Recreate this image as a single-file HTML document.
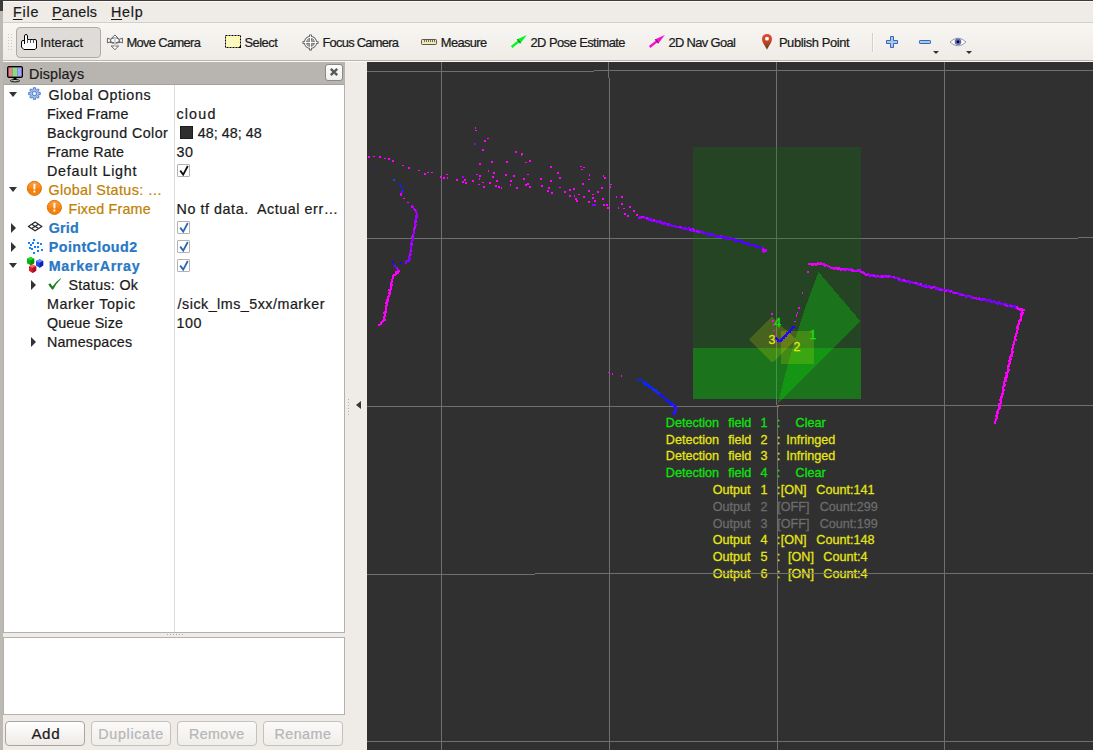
<!DOCTYPE html>
<html lang="en">
<head>
<meta charset="utf-8">
<title>RViz</title>
<style>
html,body{margin:0;padding:0;}
body{width:1093px;height:750px;overflow:hidden;position:relative;background:#efebe7;
  font-family:"Liberation Sans",sans-serif;color:#1a1a1a;}
.abs{position:absolute;}
.t{position:absolute;white-space:pre;line-height:1;-webkit-text-stroke:0.22px currentColor;}
.t u{text-decoration:underline;text-decoration-thickness:1px;text-underline-offset:2px;text-decoration-skip-ink:none;}
svg{position:absolute;overflow:visible;}
/* window edges */
#edgeTop{left:0;top:0;width:1093px;height:1px;background:#3c3b37;}
#edgeLeftDark{left:0;top:0;width:3px;height:11px;background:#3c3b37;}
#edgeLeft{left:0;top:11px;width:3px;height:739px;background:#bcb9b5;}
/* menubar */
#menubar{left:3px;top:1px;width:1090px;height:21px;background:#efece8;border-top:1px solid #fbfaf9;box-sizing:border-box;}
#menuline{left:3px;top:22px;width:1090px;height:1px;background:#d3cfca;}
/* toolbar */
#toolbar{left:3px;top:23px;width:1090px;height:37px;background:linear-gradient(#f8f6f2,#efece8);}
#tbline{left:3px;top:60px;width:1090px;height:1px;background:#b9b5b0;}
#tbline2{left:3px;top:61px;width:1090px;height:1px;background:#fbfaf8;}
#grip{left:7px;top:33px;width:5px;height:19px;background-image:radial-gradient(circle,#c9c5c0 0.7px,transparent 0.9px);background-size:3px 3px;}
#interactBtn{left:16px;top:27px;width:83px;height:29px;border:1px solid #aeaaa5;border-radius:4px;background:#dedbd8;}
#tbsep{left:872px;top:33px;width:1px;height:19px;background:#d3cfca;box-shadow:1px 0 0 #fbfaf8;}
.dd{width:0;height:0;border-left:3px solid transparent;border-right:3px solid transparent;border-top:3px solid #333;top:51px;}
/* displays dock */
#dockTitle{left:3px;top:62px;width:342px;height:23px;background:#b8b4b0;}
#closeBtn{left:325px;top:64px;width:16px;height:15px;border:1px solid #8d8a86;border-radius:3px;background:linear-gradient(#ffffff,#f0eeeb);}
#tree{left:3px;top:84px;width:340px;height:547px;background:#fff;border:1px solid #b4b0ab;border-top-color:#a5a19c;}
#treeDiv{left:174px;top:85px;width:1px;height:547px;background:#dcdcdc;}
#vdots{left:348px;top:399px;width:1px;height:17px;background-image:linear-gradient(#b3afaa 1px,transparent 1px);background-size:1px 3px;box-shadow:1px 1px 0 rgba(255,255,255,0.0);}
#splitdots{left:167px;top:634px;width:17px;height:1px;background-image:linear-gradient(90deg,#b0aca7 1px,transparent 1px);background-size:3px 1px;}
#descr{left:3px;top:637px;width:340px;height:76px;background:#fff;border:1px solid #b4b0ab;}
.btn{top:721px;width:78px;height:23px;border:1px solid #a9a5a0;border-radius:4px;background:linear-gradient(#ffffff,#edeae6);}
.btn.dis{border-color:#c4c0bb;background:linear-gradient(#fbfaf9,#f0eeea);}
.cb{width:11px;height:11px;border:1px solid #b2b2b2;background:#fff;left:177px;border-radius:1px;}
.arrR{width:0;height:0;border-top:5px solid transparent;border-bottom:5px solid transparent;border-left:5.5px solid #333;margin-top:-0.5px;}
.arrD{width:0;height:0;border-left:4.7px solid transparent;border-right:4.7px solid transparent;border-top:5.4px solid #333;margin-left:-0.2px;}
#collapse{left:356px;top:401px;width:0;height:0;border-top:4.5px solid transparent;border-bottom:4.5px solid transparent;border-right:5px solid #363636;}
/* 3d view */
.st{position:absolute;white-space:pre;line-height:1;font-size:12.6px;-webkit-text-stroke:0.28px currentColor;}
.sl{font-size:12.4px;}
#view{left:367px;top:62px;width:726px;height:688px;background:#303030;overflow:hidden;}
</style>
</head>
<body>
<div id="edgeTop" class="abs"></div>
<div id="menubar" class="abs"></div>
<div id="menuline" class="abs"></div>
<div id="toolbar" class="abs"></div>
<div id="tbline" class="abs"></div>
<div id="tbline2" class="abs"></div>
<div id="edgeLeftDark" class="abs"></div>
<div id="edgeLeft" class="abs"></div>
<div id="grip" class="abs"></div>
<div id="interactBtn" class="abs"></div>
<div id="tbsep" class="abs"></div>
<div class="abs dd" style="left:933px"></div>
<div class="abs dd" style="left:966px"></div>

<div id="dockTitle" class="abs"></div>
<div id="closeBtn" class="abs"></div>
<div id="tree" class="abs"></div>
<div id="treeDiv" class="abs"></div>
<div id="splitdots" class="abs"></div>
<div id="descr" class="abs"></div>
<div class="abs btn" style="left:5px"></div>
<div class="abs btn dis" style="left:91px"></div>
<div class="abs btn dis" style="left:177px"></div>
<div class="abs btn dis" style="left:263px"></div>
<div id="collapse" class="abs"></div>
<div id="vdots" class="abs"></div>
<svg style="left:0;top:0" width="1093" height="750" viewBox="0 0 1093 750">
<defs>
<linearGradient id="pinG" x1="0" y1="0" x2="0" y2="1"><stop offset="0" stop-color="#ea4a2c"/><stop offset="0.45" stop-color="#c8482a"/><stop offset="1" stop-color="#5a3e10"/></linearGradient>
<linearGradient id="warnG" x1="0" y1="0" x2="0" y2="1"><stop offset="0" stop-color="#fba040"/><stop offset="0.5" stop-color="#f98a1c"/><stop offset="0.52" stop-color="#f57e08"/><stop offset="1" stop-color="#f68410"/></linearGradient>

</defs>
<!-- interact hand -->
<g transform="translate(21,34)">
<path d="M3.5 10 V1.9 Q3.5 0.5 5 0.5 Q6.5 0.5 6.5 1.9 V5.5 H8.2 Q9.5 5.5 9.5 6.3 V5.5 H11.2 Q12.5 5.5 12.5 6.3 V5.5 H14 Q15.5 5.5 15.5 7 V14 L14 15.5 H2.8 L0.5 13 V8 Q0.5 6.5 2 6.5 H3.5" fill="#fff" stroke="#000" stroke-width="1" stroke-linejoin="round"/>
<path d="M6.5 5.5V9 M9.5 6V9 M12.5 6V9" stroke="#555" stroke-width="1" fill="none"/>
</g>
<!-- move camera -->
<g stroke="#555" fill="#fff" stroke-width="0.9" stroke-linejoin="round">
<path d="M107.4 38.2 V42.9 L110.6 41.7 V39.4 Z"/>
<path d="M122.4 38.2 V42.9 L119.2 41.7 V39.4 Z"/>
<path d="M114.9 34.9 L111.2 38.6 H118.6 Z"/>
<path d="M114.9 49.7 L111.2 46 H118.6 Z"/>
<ellipse cx="114.9" cy="40.3" rx="4.2" ry="2.4" fill="#fff"/>
<path d="M109.5 42.2 Q114.9 44.9 120.3 42.2" fill="none"/>
<rect x="114" y="37.4" width="1.8" height="9.6" fill="#cdcdcd" stroke="none"/>
</g>
<!-- select -->
<rect x="226" y="36" width="14" height="11" fill="#fdf7c2"/>
<rect x="226.5" y="36.5" width="13" height="10" fill="none" stroke="#fffc9e" stroke-width="1"/>
<rect x="225.5" y="35.5" width="15" height="12" fill="none" stroke="#000" stroke-width="1" stroke-dasharray="2 1"/>
<path d="M241 45 V48 H238 Z" fill="#000"/>
<!-- focus camera -->
<g transform="translate(310.5,42.4)" fill="none">
<path d="M-8 0 H8 M0 -8 V8" stroke="#6c6c6c" stroke-width="3"/>
<circle r="5" stroke="#6c6c6c" stroke-width="3.2"/>
<circle r="5" stroke="#fff" stroke-width="1.2"/>
<circle r="3" fill="#8a8a8a"/>
<path d="M-7 0 H7 M0 -7 V7" stroke="#fff" stroke-width="1"/>
</g>
<!-- measure ruler -->
<rect x="421.5" y="39.5" width="15" height="5" rx="0.8" fill="#f1e9ab" stroke="#585858" stroke-width="1"/>
<path d="M424.5 40V42 M426.5 40V42 M428.5 40V42 M430.5 40V42 M432.5 40V42 M434.5 40V42" stroke="#6a6a6a" stroke-width="1"/>
<!-- pose estimate / nav goal arrows -->
<g fill="#08f520"><path d="M510.9 46.1 L512.4 48 L519.45 42.35 L517.95 40.45 Z"/><path d="M516.7 39.5 L520.1 43.8 L526.9 34.9 Z"/><path d="M516.7 39.5 L520.1 43.8 L520.9 42.7 L518 39 Z" fill="#000" fill-opacity="0.38"/></g>
<g fill="#f510d2" transform="translate(138,0)"><path d="M510.9 46.1 L512.4 48 L519.45 42.35 L517.95 40.45 Z"/><path d="M516.7 39.5 L520.1 43.8 L526.9 34.9 Z"/><path d="M516.7 39.5 L520.1 43.8 L520.9 42.7 L518 39 Z" fill="#000" fill-opacity="0.38"/></g>
<!-- publish point pin -->
<path d="M767 49.8 C765.2 45.6 762 42.4 762 38.9 A5 5 0 0 1 772 38.9 C772 42.4 768.8 45.6 767 49.8 Z" fill="url(#pinG)"/>
<circle cx="767" cy="38.7" r="1.9" fill="#fff"/>
<!-- plus / minus -->
<path d="M890.5 36.5 H893.5 V40.5 H897.5 V43.5 H893.5 V47.5 H890.5 V43.5 H886.5 V40.5 H890.5 Z" fill="#a9c6ee" stroke="#3768b0" stroke-width="1" stroke-linejoin="round"/>
<rect x="919.5" y="40.5" width="11" height="3" rx="0.6" fill="#a9c6ee" stroke="#3768b0" stroke-width="1"/>
<!-- eye -->
<path d="M950 42 Q958 34.2 966 42 Q958 49.8 950 42 Z" fill="#fff" stroke="#9a9a9a" stroke-width="1"/>
<circle cx="958" cy="41.8" r="3.3" fill="#5b6bc4"/>
<circle cx="958" cy="41.8" r="1.3" fill="#000"/>
<!-- dock title monitor -->
<rect x="7.5" y="66.5" width="15" height="11" rx="1.2" fill="#000" stroke="#000" stroke-width="1"/>
<rect x="8.4" y="67.4" width="4.4" height="9.2" fill="#df8585"/>
<rect x="12.6" y="67.4" width="5" height="9.2" fill="#85de85"/>
<rect x="17.4" y="67.4" width="4.3" height="9.2" fill="#a3a3fb"/>
<path d="M13.5 78 H16.5 V80 H13.5 Z" fill="#000"/>
<ellipse cx="15" cy="80.8" rx="4.6" ry="1.1" fill="#fff" stroke="#000" stroke-width="1"/>
<!-- close X -->
<path d="M330.8 68.8 L337.2 75.2 M337.2 68.8 L330.8 75.2" stroke="#5a5a5a" stroke-width="2.4"/>
</svg>

<div class="abs arrD" style="left:9px;top:92px"></div>
<div class="abs arrD" style="left:9px;top:187px"></div>
<div class="abs arrR" style="left:11px;top:223px"></div>
<div class="abs arrR" style="left:11px;top:242px"></div>
<div class="abs arrD" style="left:9px;top:263px"></div>
<div class="abs arrR" style="left:31px;top:280px"></div>
<div class="abs arrR" style="left:31px;top:337px"></div>
<div class="abs cb" style="top:164px"></div>
<div class="abs cb" style="top:221px"></div>
<div class="abs cb" style="top:240px"></div>
<div class="abs cb" style="top:259px"></div>
<div class="abs" style="left:180px;top:126px;width:13px;height:13px;background:#2f2f2f;box-shadow:inset 0 0 0 1px #1c1c1c"></div>
<svg style="left:0;top:0" width="360" height="360" viewBox="0 0 360 360">
<!-- checks -->
<path d="M180.2 170.6 L183.2 174.6 L187.8 166" fill="none" stroke="#111" stroke-width="1.8"/>
<g fill="none" stroke="#2b67b3" stroke-width="1.8">
<path d="M180.2 227.6 L183.2 231.6 L187.8 223"/>
<path d="M180.2 246.6 L183.2 250.6 L187.8 242"/>
<path d="M180.2 265.6 L183.2 269.6 L187.8 261"/>
</g>
<!-- gear -->
<g transform="translate(34.45,93.55) scale(0.89)">
<g fill="#a9c1e9" stroke="#3a72c4" stroke-width="1" stroke-linejoin="round">
<path d="M-1.3 -6.5 H1.3 V-4.6 L2.6 -4 L4 -5.4 L5.4 -4 L4 -2.6 L4.6 -1.3 H6.5 V1.3 H4.6 L4 2.6 L5.4 4 L4 5.4 L2.6 4 L1.3 4.6 V6.5 H-1.3 V4.6 L-2.6 4 L-4 5.4 L-5.4 4 L-4 2.6 L-4.6 1.3 H-6.5 V-1.3 H-4.6 L-4 -2.6 L-5.4 -4 L-4 -5.4 L-2.6 -4 L-1.3 -4.6 Z"/>
<circle r="2.4" fill="#e6eefa"/>
</g>
<circle r="1.1" fill="#fff"/>
</g>
<!-- warning icons -->
<g id="warn1" transform="translate(34.4,188.4)">
<circle r="7" fill="url(#warnG)" stroke="#dc6c02" stroke-width="1"/>
<rect x="-1" y="-4.6" width="2" height="5.6" rx="0.4" fill="#fff" fill-opacity="0.92"/>
<rect x="-1" y="2.2" width="2" height="2" rx="0.4" fill="#fff"/>
</g>
<g transform="translate(54.4,207.4)">
<circle r="7" fill="url(#warnG)" stroke="#dc6c02" stroke-width="1"/>
<rect x="-1" y="-4.6" width="2" height="5.6" rx="0.4" fill="#fff" fill-opacity="0.92"/>
<rect x="-1" y="2.2" width="2" height="2" rx="0.4" fill="#fff"/>
</g>
<!-- grid icon -->
<g fill="none" stroke="#262626" stroke-width="1.2" stroke-linejoin="round">
<path d="M28.4 226.4 L35.1 222 L41.9 226.4 L35.1 230.8 Z"/>
<path d="M31.75 224.2 L38.5 228.6 M38.5 224.2 L31.75 228.6"/>
</g>
<!-- pointcloud icon -->
<path fill="#1381fb" d="M33 239h2v2h-2zM28 242h2v2h-2zM32 242h2v2h-2zM37 242h2v2h-2zM40 243h2v2h-2zM30 244h2v2h-2zM34 246h2v2h-2zM37 246h2v2h-2zM29 247h2v2h-2zM31 248h2v2h-2zM37 250h2v2h-2zM41 249h2v2h-2zM33 252h2v2h-2z"/>
<!-- marker cubes -->
<g>
<path d="M30.6 257 L34.2 258.8 V263.2 L30.6 265.2 L27 263.2 V258.8 Z" fill="#0fae0f"/>
<path d="M30.6 257 L34.2 258.8 L30.6 260.6 L27 258.8 Z" fill="#12e412"/>
<path d="M30.6 260.6 L34.2 258.8 V263.2 L30.6 265.2 Z" fill="#0a8c0a"/>
<path d="M39.6 259.2 L43.2 261 V265.6 L39.6 267.8 L36 265.6 V261 Z" fill="#2347e0"/>
<path d="M39.6 259.2 L43.2 261 L39.6 262.8 L36 261 Z" fill="#6a8cff"/>
<path d="M39.6 262.8 L43.2 261 V265.6 L39.6 267.8 Z" fill="#0a22b8"/>
<path d="M32.6 264.4 L36.2 266.2 V270.8 L32.6 273 L29 270.8 V266.2 Z" fill="#d61e2a"/>
<path d="M32.6 264.4 L36.2 266.2 L32.6 268 L29 266.2 Z" fill="#f26a72"/>
<path d="M32.6 268 L36.2 266.2 V270.8 L32.6 273 Z" fill="#b00c18"/>
</g>
<!-- status ok check -->
<path d="M48.3 284.6 L50.2 283.3 L52.6 286.6 Q56 281.4 60.6 278.2 L61 278.8 Q56.6 283 53.2 289.5 L52 289.5 Z" fill="#1d7c1d"/>
</svg>

<span class="t" style="left:12.90px;top:5.10px;font-size:14.3px;letter-spacing:0.800px;color:#1a1a1a;"><u>F</u>ile</span>
<span class="t" style="left:52.00px;top:5.10px;font-size:14.3px;letter-spacing:0.260px;color:#1a1a1a;"><u>P</u>anels</span>
<span class="t" style="left:111.00px;top:5.10px;font-size:14.3px;letter-spacing:0.767px;color:#1a1a1a;"><u>H</u>elp</span>
<span class="t" style="left:40.30px;top:37.18px;font-size:12.9px;letter-spacing:-0.043px;color:#1a1a1a;">Interact</span>
<span class="t" style="left:126.40px;top:37.18px;font-size:12.9px;letter-spacing:-0.640px;color:#1a1a1a;">Move Camera</span>
<span class="t" style="left:244.50px;top:37.18px;font-size:12.9px;letter-spacing:-0.520px;color:#1a1a1a;">Select</span>
<span class="t" style="left:322.40px;top:37.18px;font-size:12.9px;letter-spacing:-0.727px;color:#1a1a1a;">Focus Camera</span>
<span class="t" style="left:440.80px;top:37.18px;font-size:12.9px;letter-spacing:-0.633px;color:#1a1a1a;">Measure</span>
<span class="t" style="left:530.50px;top:37.18px;font-size:12.9px;letter-spacing:-0.547px;color:#1a1a1a;">2D Pose Estimate</span>
<span class="t" style="left:668.50px;top:37.18px;font-size:12.9px;letter-spacing:-0.650px;color:#1a1a1a;">2D Nav Goal</span>
<span class="t" style="left:778.90px;top:37.18px;font-size:12.9px;letter-spacing:-0.375px;color:#1a1a1a;">Publish Point</span>
<span class="t" style="left:29.00px;top:67.10px;font-size:14.3px;letter-spacing:0.143px;color:#1a1a1a;">Displays</span>
<span class="t" style="left:48.40px;top:88.00px;font-size:14.3px;letter-spacing:0.585px;color:#1a1a1a;">Global Options</span>
<span class="t" style="left:46.90px;top:107.00px;font-size:14.3px;letter-spacing:0.120px;color:#1a1a1a;">Fixed Frame</span>
<span class="t" style="left:46.90px;top:126.00px;font-size:14.3px;letter-spacing:0.433px;color:#1a1a1a;">Background Color</span>
<span class="t" style="left:46.90px;top:145.00px;font-size:14.3px;letter-spacing:0.178px;color:#1a1a1a;">Frame Rate</span>
<span class="t" style="left:46.90px;top:164.00px;font-size:14.3px;letter-spacing:0.783px;color:#1a1a1a;">Default Light</span>
<span class="t" style="left:48.40px;top:183.00px;font-size:14.3px;letter-spacing:0.380px;color:#c08000;">Global Status: …</span>
<span class="t" style="left:68.50px;top:202.00px;font-size:14.3px;letter-spacing:0.190px;color:#c08000;">Fixed Frame</span>
<span class="t" style="left:48.80px;top:221.00px;font-size:14.3px;letter-spacing:0.167px;color:#2878c5;font-weight:700;">Grid</span>
<span class="t" style="left:48.80px;top:240.00px;font-size:14.3px;letter-spacing:0.410px;color:#2878c5;font-weight:700;">PointCloud2</span>
<span class="t" style="left:48.80px;top:259.00px;font-size:14.3px;letter-spacing:0.660px;color:#2878c5;font-weight:700;">MarkerArray</span>
<span class="t" style="left:68.50px;top:278.00px;font-size:14.3px;letter-spacing:0.300px;color:#1a1a1a;">Status: Ok</span>
<span class="t" style="left:46.90px;top:297.00px;font-size:14.3px;letter-spacing:0.600px;color:#1a1a1a;">Marker Topic</span>
<span class="t" style="left:46.90px;top:316.00px;font-size:14.3px;letter-spacing:0.144px;color:#1a1a1a;">Queue Size</span>
<span class="t" style="left:46.90px;top:335.00px;font-size:14.3px;letter-spacing:0.200px;color:#1a1a1a;">Namespaces</span>
<span class="t" style="left:176.40px;top:107.00px;font-size:14.3px;letter-spacing:1.200px;color:#1a1a1a;">cloud</span>
<span class="t" style="left:197.70px;top:126.00px;font-size:14.3px;letter-spacing:0.044px;color:#1a1a1a;">48; 48; 48</span>
<span class="t" style="left:176.40px;top:145.00px;font-size:14.3px;letter-spacing:0.700px;color:#1a1a1a;">30</span>
<span class="t" style="left:176.60px;top:202.00px;font-size:14.3px;letter-spacing:0.557px;color:#1a1a1a;">No tf data.  Actual err…</span>
<span class="t" style="left:177.60px;top:297.00px;font-size:14.3px;letter-spacing:0.495px;color:#1a1a1a;">/sick_lms_5xx/marker</span>
<span class="t" style="left:176.60px;top:316.00px;font-size:14.3px;letter-spacing:0.500px;color:#1a1a1a;">100</span>
<span class="t" style="left:31.40px;top:726.23px;font-size:15.2px;letter-spacing:0.600px;color:#1a1a1a;">Add</span>
<span class="t" style="left:98.30px;top:727.00px;font-size:14.3px;letter-spacing:0.675px;color:#b6b6b6;">Duplicate</span>
<span class="t" style="left:188.90px;top:727.00px;font-size:14.3px;letter-spacing:0.420px;color:#b6b6b6;">Remove</span>
<span class="t" style="left:274.40px;top:727.00px;font-size:14.3px;letter-spacing:0.480px;color:#b6b6b6;">Rename</span>
<div id="view" class="abs">
<svg class="abs" style="left:0;top:0" width="726" height="688" viewBox="0 0 726 688" shape-rendering="crispEdges">
<g fill="#6f6f6f">
<!-- horizontal grid -->
<rect x="0" y="9" width="227" height="1"/><rect x="227" y="8" width="499" height="1"/>
<rect x="0" y="176" width="711" height="1"/><rect x="711" y="175" width="15" height="1"/>
<rect x="0" y="344" width="410" height="1"/><rect x="410" y="343" width="316" height="1"/>
<rect x="0" y="512" width="168" height="1"/><rect x="168" y="511" width="558" height="1"/>
<rect x="0" y="679" width="726" height="1"/>
<!-- vertical grid -->
<rect x="74" y="0" width="1" height="688"/>
<rect x="241" y="0" width="1" height="16"/><rect x="242" y="16" width="1" height="672"/>
<rect x="409" y="0" width="1" height="343"/><rect x="410" y="343" width="1" height="345"/>
<rect x="577" y="0" width="1" height="688"/>
</g>
<!-- detection fields -->
<rect x="326" y="85" width="168" height="252" fill="rgba(0,128,0,0.25)"/>
<rect x="326" y="286" width="168" height="51" fill="rgba(0,255,0,0.25)"/>
<polygon points="451.5,209.9 493.4,259.2 410.2,342.4 412,336.8 419.4,308 428,278 437.4,248" fill="rgba(0,255,0,0.25)"/>
<polygon points="381.7,277.7 405,254.5 428.8,277.4 405,301" fill="rgba(255,255,0,0.17)"/>
<rect x="414" y="269" width="33" height="33" fill="rgba(255,255,0,0.17)"/>
<rect x="410" y="343" width="2" height="2" fill="#f05050"/>
<path fill="#ff00ff" d="M1 94h2v2h-2zM6 94h2v1h-2zM12 94h2v2h-2zM17 96h2v1h-2zM21 96h2v2h-2zM25 98h2v2h-2zM35 103h2v1h-2zM41 105h2v2h-2zM51 108h2v1h-2zM57 111h2v2h-2zM60 110h2v1h-2zM64 110h2v1h-2zM73 114h2v2h-2zM76 115h2v2h-2zM79 112h2v1h-2zM80 115h1v2h-1zM89 117h2v2h-2zM97 117h2v2h-2zM95 119h2v2h-2zM98 120h2v2h-2zM105 118h2v2h-2zM109 112h2v1h-2zM112 113h2v2h-2zM112 116h1v2h-1zM115 120h2v1h-2zM111 122h2v1h-2zM116 124h2v2h-2zM122 120h2v2h-2zM121 108h1v2h-1zM124 99h2v2h-2zM112 101h2v2h-2zM115 87h2v2h-2zM117 78h2v2h-2zM120 76h2v1h-2zM108 68h2v1h-2zM108 65h1v2h-1zM126 110h2v2h-2zM125 114h2v2h-2zM129 118h2v2h-2zM128 123h2v2h-2zM131 124h2v2h-2zM134 125h1v2h-1zM138 112h2v2h-2zM139 99h2v2h-2zM143 122h1v2h-1zM143 118h2v2h-2zM146 113h2v2h-2zM149 125h2v2h-2zM148 89h2v2h-2zM154 92h1v2h-1zM156 116h2v2h-2zM158 100h2v1h-2zM158 122h2v2h-2zM154 91h2v2h-2zM158 100h2v1h-2zM162 98h2v2h-2zM160 112h2v1h-2zM156 116h2v2h-2zM158 122h2v2h-2zM160 121h2v2h-2zM162 124h2v2h-2zM173 116h2v2h-2zM174 123h2v2h-2zM183 104h2v2h-2zM183 118h2v2h-2zM181 125h2v2h-2zM180 128h2v2h-2zM184 130h2v2h-2zM190 110h2v2h-2zM192 115h2v2h-2zM192 125h2v1h-2zM197 129h2v2h-2zM202 127h2v2h-2zM206 126h2v2h-2zM202 133h2v2h-2zM207 133h1v2h-1zM208 136h2v2h-2zM209 138h2v2h-2zM211 132h2v1h-2zM216 134h2v2h-2zM213 104h2v1h-2zM216 105h2v1h-2zM214 107h2v1h-2zM215 121h2v2h-2zM221 117h2v1h-2zM222 112h1v2h-1zM221 128h2v2h-2zM221 139h2v2h-2zM225 132h2v1h-2zM225 135h2v2h-2zM227 138h2v2h-2zM230 129h2v2h-2zM234 125h2v2h-2zM235 136h2v2h-2zM236 113h1v2h-1zM237 115h2v2h-2zM236 142h2v2h-2zM239 142h2v2h-2zM240 145h2v2h-2zM241 146h2v1h-2zM243 122h2v1h-2zM243 124h1v2h-1zM249 134h1v2h-1zM254 134h2v2h-2zM254 141h2v2h-2zM251 145h1v2h-1zM256 146h2v1h-2zM262 144h2v2h-2zM266 148h2v2h-2zM257 151h2v2h-2zM260 153h2v2h-2zM269 152h2v2h-2zM36 136h2v1h-2zM40 140h2v1h-2zM31 208h2v2h-2zM29 209h2v2h-2zM30 210h2v2h-2zM28 209h2v2h-2zM28 211h2v2h-2zM27 212h2v2h-2zM26 212h2v2h-2zM25 213h2v2h-2zM25 213h2v2h-2zM25 214h2v2h-2zM25 215h2v2h-2zM24 217h2v2h-2zM24 217h2v2h-2zM24 217h2v2h-2zM24 219h2v2h-2zM23 220h2v2h-2zM23 221h2v2h-2zM24 222h2v2h-2zM23 223h2v2h-2zM23 224h2v2h-2zM23 224h2v2h-2zM23 226h2v2h-2zM22 227h2v2h-2zM21 227h2v2h-2zM22 229h2v2h-2zM22 230h2v2h-2zM21 230h2v2h-2zM22 231h2v2h-2zM21 233h2v2h-2zM20 234h2v2h-2zM20 234h2v2h-2zM20 236h2v2h-2zM20 236h2v2h-2zM19 237h2v2h-2zM20 238h2v2h-2zM19 239h2v2h-2zM18 240h2v2h-2zM19 241h2v2h-2zM19 242h2v2h-2zM18 243h2v2h-2zM18 244h2v2h-2zM18 245h2v2h-2zM18 246h2v2h-2zM18 247h2v2h-2zM18 249h2v2h-2zM17 249h2v2h-2zM16 250h2v2h-2zM17 251h2v2h-2zM17 252h2v2h-2zM17 253h2v2h-2zM16 254h2v2h-2zM16 255h2v2h-2zM16 256h2v2h-2zM17 257h2v2h-2zM16 257h2v2h-2zM15 258h2v2h-2zM14 259h2v2h-2zM13 260h2v2h-2zM13 261h2v2h-2zM11 262h2v2h-2zM241 310h2v1h-2zM245 311h1v2h-1zM254 313h1v2h-1zM656 247h2v2h-2zM654 249h2v2h-2zM655 250h2v2h-2zM653 251h2v2h-2zM654 251h2v2h-2zM653 251h2v2h-2zM654 252h2v2h-2zM653 252h2v2h-2zM653 254h2v2h-2zM653 254h2v2h-2zM653 256h2v2h-2zM653 256h2v2h-2zM652 257h2v2h-2zM653 257h2v2h-2zM652 257h2v2h-2zM652 258h2v2h-2zM651 258h2v2h-2zM651 260h2v2h-2zM651 260h2v2h-2zM651 261h2v2h-2zM650 262h2v2h-2zM650 262h2v2h-2zM650 262h2v2h-2zM650 263h2v2h-2zM649 264h2v2h-2zM649 265h2v2h-2zM650 265h2v2h-2zM650 266h2v2h-2zM649 268h2v2h-2zM649 268h2v2h-2zM649 268h2v2h-2zM649 269h2v2h-2zM649 270h2v2h-2zM648 271h2v2h-2zM648 272h2v2h-2zM648 272h2v2h-2zM648 272h2v2h-2zM648 273h2v2h-2zM647 274h2v2h-2zM647 275h2v2h-2zM647 275h2v2h-2zM647 276h2v2h-2zM648 277h2v2h-2zM647 277h2v2h-2zM646 279h2v2h-2zM646 279h2v2h-2zM646 279h2v2h-2zM646 281h2v2h-2zM645 282h2v2h-2zM646 281h2v2h-2zM645 282h2v2h-2zM645 282h2v2h-2zM645 283h2v2h-2zM645 285h2v2h-2zM645 285h2v2h-2zM644 286h2v2h-2zM644 286h2v2h-2zM644 286h2v2h-2zM644 288h2v2h-2zM645 289h2v2h-2zM644 289h2v2h-2zM644 290h2v2h-2zM644 291h2v2h-2zM644 292h2v2h-2zM643 292h2v2h-2zM643 293h2v2h-2zM644 293h2v2h-2zM642 294h2v2h-2zM642 295h2v2h-2zM643 296h2v2h-2zM642 296h2v2h-2zM642 297h2v2h-2zM642 298h2v2h-2zM641 298h2v2h-2zM642 299h2v2h-2zM642 299h2v2h-2zM641 301h2v2h-2zM642 300h2v2h-2zM641 302h2v2h-2zM641 302h2v2h-2zM641 303h2v2h-2zM640 303h2v2h-2zM640 304h2v2h-2zM640 305h2v2h-2zM640 305h2v2h-2zM640 306h2v2h-2zM641 307h2v2h-2zM640 308h2v2h-2zM640 308h2v2h-2zM640 309h2v2h-2zM639 310h2v2h-2zM638 310h2v2h-2zM639 311h2v2h-2zM639 313h2v2h-2zM638 313h2v2h-2zM639 313h2v2h-2zM639 314h2v2h-2zM638 315h2v2h-2zM637 315h2v2h-2zM638 317h2v2h-2zM638 318h2v2h-2zM637 317h2v2h-2zM637 318h2v2h-2zM636 319h2v2h-2zM636 319h2v2h-2zM636 321h2v2h-2zM637 322h2v2h-2zM636 321h2v2h-2zM636 322h2v2h-2zM636 323h2v2h-2zM636 323h2v2h-2zM635 325h2v2h-2zM635 324h2v2h-2zM635 327h2v2h-2zM636 327h2v2h-2zM635 328h2v2h-2zM635 328h2v2h-2zM635 329h2v2h-2zM635 329h2v2h-2zM635 329h2v2h-2zM635 331h2v2h-2zM634 331h2v2h-2zM634 332h2v2h-2zM634 332h2v2h-2zM634 333h2v2h-2zM634 334h2v2h-2zM633 334h2v2h-2zM633 335h2v2h-2zM633 336h2v2h-2zM632 337h2v2h-2zM633 338h2v2h-2zM633 339h2v2h-2zM633 339h2v2h-2zM633 339h2v2h-2zM633 340h2v2h-2zM631 341h2v2h-2zM631 341h2v2h-2zM632 342h2v2h-2zM632 343h2v2h-2zM631 344h2v2h-2zM632 345h2v2h-2zM631 345h2v2h-2zM631 346h2v2h-2zM630 347h2v2h-2zM631 346h2v2h-2zM630 348h2v2h-2zM629 349h2v2h-2zM630 349h2v2h-2zM630 350h2v2h-2zM629 350h2v2h-2zM629 351h2v2h-2zM629 352h2v2h-2zM629 353h2v2h-2zM629 354h2v2h-2zM628 353h2v2h-2zM629 355h2v2h-2zM628 356h2v2h-2zM628 356h2v2h-2zM628 357h2v2h-2zM628 357h2v2h-2zM627 359h2v2h-2zM627 359h2v2h-2zM627 360h2v2h-2zM627 360h2v2h-2zM440 209h2v2h-2zM435 230h1v2h-1zM431 245h2v2h-2zM430 250h1v2h-1zM429 253h1v2h-1zM404 251h2v2h-2zM405 258h2v2h-2zM406 262h1v2h-1zM406 268h2v1h-2zM430 250h1v2h-1zM429 252h1v2h-1zM427 259h2v1h-2zM407 273h1v1h-1z"/>
<path fill="#8c00ff" d="M107 81h2v2h-2zM225 142h4v2h-4zM273 155h2v2h-2zM273 154h2v2h-2zM274 154h2v2h-2zM276 154h2v2h-2zM277 155h2v2h-2zM277 155h2v2h-2zM279 156h2v2h-2zM280 156h2v2h-2zM280 155h2v2h-2zM281 156h2v2h-2zM281 157h2v2h-2zM283 157h2v2h-2zM283 156h2v2h-2zM284 158h2v2h-2zM284 158h2v2h-2zM286 158h2v2h-2zM286 157h2v2h-2zM287 158h2v2h-2zM289 158h2v2h-2zM289 159h2v2h-2zM289 158h2v2h-2zM290 159h2v2h-2zM291 159h2v2h-2zM292 158h2v2h-2zM293 160h2v2h-2zM293 159h2v2h-2zM293 160h2v2h-2zM294 160h2v2h-2zM295 160h2v2h-2zM295 161h2v2h-2zM296 161h2v2h-2zM297 160h2v2h-2zM297 160h2v2h-2zM299 161h2v2h-2zM299 162h2v2h-2zM299 161h2v2h-2zM300 162h2v2h-2zM301 161h2v2h-2zM302 162h2v2h-2zM45 174h2v2h-2zM45 175h2v2h-2zM45 176h2v2h-2zM45 177h2v2h-2zM44 178h2v2h-2zM43 180h2v2h-2zM43 181h2v2h-2zM44 182h2v2h-2zM43 183h2v2h-2zM43 185h2v2h-2zM43 186h2v2h-2zM43 186h2v2h-2zM43 187h2v2h-2zM42 190h2v2h-2zM43 191h2v2h-2zM42 193h2v2h-2zM41 194h2v2h-2zM42 196h2v2h-2zM41 196h2v2h-2zM41 198h2v2h-2zM40 198h2v2h-2zM39 198h2v2h-2zM38 199h2v2h-2zM38 200h2v2h-2zM27 203h2v2h-2zM516 214h2v2h-2zM516 213h2v2h-2zM517 214h2v2h-2zM519 213h2v2h-2zM519 213h2v2h-2zM522 213h2v2h-2zM522 213h2v2h-2zM523 214h2v2h-2zM523 214h2v2h-2zM524 214h2v2h-2zM525 214h2v2h-2zM526 214h2v2h-2zM527 215h2v2h-2zM527 215h2v2h-2zM528 215h2v2h-2zM530 215h2v2h-2zM530 215h2v2h-2zM531 217h2v2h-2zM533 217h2v2h-2zM532 217h2v2h-2zM534 217h2v2h-2zM534 218h2v2h-2zM535 217h2v2h-2zM536 218h2v2h-2zM538 218h2v2h-2zM538 218h2v2h-2zM539 219h2v2h-2zM539 218h2v2h-2zM541 218h2v2h-2zM541 218h2v2h-2zM542 219h2v2h-2zM542 220h2v2h-2zM543 219h2v2h-2zM544 219h2v2h-2zM545 220h2v2h-2zM545 220h2v2h-2zM545 220h2v2h-2zM546 220h2v2h-2zM549 221h2v2h-2zM549 221h2v2h-2zM549 220h2v2h-2zM551 221h2v2h-2zM551 222h2v2h-2zM552 222h2v2h-2zM553 222h2v2h-2zM554 223h2v2h-2zM554 223h2v2h-2zM555 223h2v2h-2zM557 223h2v2h-2zM558 223h2v2h-2zM557 224h2v2h-2zM558 222h2v2h-2zM559 224h2v2h-2zM561 223h2v2h-2zM561 224h2v2h-2zM561 223h2v2h-2zM563 224h2v2h-2zM563 224h2v2h-2zM564 224h2v2h-2zM567 224h2v2h-2zM568 226h2v2h-2zM568 225h2v2h-2zM569 226h2v2h-2zM569 226h2v2h-2zM570 225h2v2h-2zM570 226h2v2h-2zM571 227h2v2h-2zM572 226h2v2h-2zM573 226h2v2h-2zM573 226h2v2h-2zM575 227h2v2h-2zM575 227h2v2h-2zM576 227h2v2h-2zM578 227h2v2h-2zM578 228h2v2h-2zM579 227h2v2h-2zM580 227h2v2h-2zM582 228h2v2h-2zM581 228h2v2h-2zM582 229h2v2h-2zM583 228h2v2h-2zM585 230h2v2h-2zM585 229h2v2h-2zM587 230h2v2h-2zM588 230h2v2h-2zM588 230h2v2h-2zM589 230h2v2h-2zM590 230h2v2h-2zM591 231h2v2h-2zM592 232h2v2h-2zM592 232h2v2h-2zM593 231h2v2h-2zM594 232h2v2h-2zM596 232h2v2h-2zM595 232h2v2h-2zM595 232h2v2h-2zM596 232h2v2h-2zM598 233h2v2h-2zM598 234h2v2h-2zM598 233h2v2h-2zM600 233h2v2h-2zM600 233h2v2h-2zM602 233h2v2h-2zM602 233h2v2h-2zM603 234h2v2h-2zM604 234h2v2h-2zM604 235h2v2h-2zM604 234h2v2h-2zM606 235h2v2h-2zM606 235h2v2h-2zM607 235h2v2h-2zM609 236h2v2h-2zM611 236h2v2h-2zM611 235h2v2h-2zM612 236h2v2h-2zM613 236h2v2h-2zM613 237h2v2h-2zM614 237h2v2h-2zM615 237h2v2h-2zM615 237h2v2h-2zM615 236h2v2h-2zM616 237h2v2h-2zM617 236h2v2h-2zM619 237h2v2h-2z"/>
<path fill="#a000ff" d="M95 114h2v2h-2zM272 154h2v2h-2zM271 155h2v2h-2zM353 173h2v2h-2zM353 174h2v2h-2zM362 175h2v2h-2zM364 176h2v2h-2zM370 177h2v2h-2zM375 179h2v2h-2zM389 183h2v2h-2zM394 185h2v2h-2zM394 185h2v2h-2zM44 143h2v2h-2zM45 144h2v2h-2zM46 146h2v2h-2zM46 146h2v2h-2zM48 148h2v2h-2zM48 149h2v2h-2zM48 149h2v2h-2zM49 151h2v2h-2zM49 152h2v2h-2zM48 153h2v2h-2zM49 153h2v2h-2zM49 154h2v2h-2zM48 155h2v2h-2zM48 157h2v2h-2zM47 158h2v2h-2zM47 160h2v2h-2zM48 162h2v2h-2zM47 162h2v2h-2zM47 165h2v2h-2zM46 167h2v2h-2zM46 169h2v2h-2zM46 170h2v2h-2zM46 170h2v2h-2zM45 172h2v2h-2zM29 205h2v2h-2zM502 212h2v2h-2zM502 213h2v2h-2zM503 213h2v2h-2zM504 212h2v2h-2zM504 213h2v2h-2zM505 212h2v2h-2zM506 212h2v2h-2zM508 213h2v2h-2zM508 214h2v2h-2zM509 213h2v2h-2zM509 213h2v2h-2zM510 213h2v2h-2zM512 214h2v2h-2zM512 214h2v2h-2zM513 213h2v2h-2zM513 213h2v2h-2z"/>
<path fill="#2800ff" d="M6 104h2v1h-2zM33 200h2v2h-2zM25 199h2v2h-2zM305 351h2v2h-2zM408 275h2v2h-2zM409 276h2v2h-2zM409 276h2v2h-2zM410 277h2v2h-2zM410 278h2v2h-2zM411 278h2v2h-2zM413 278h2v2h-2zM413 277h2v2h-2zM414 277h2v2h-2zM414 276h2v2h-2zM415 275h2v2h-2zM416 275h2v2h-2zM416 274h2v2h-2zM417 273h2v2h-2zM418 273h2v2h-2zM418 272h2v2h-2zM419 271h2v2h-2zM419 270h2v2h-2zM420 270h2v2h-2zM421 269h2v2h-2zM422 269h2v2h-2zM422 268h2v2h-2zM423 267h2v2h-2zM424 266h2v2h-2zM424 266h2v2h-2zM424 265h2v2h-2zM425 264h2v2h-2zM426 264h2v2h-2z"/>
<path fill="#c800ff" d="M274 154h2v2h-2zM275 154h2v2h-2zM279 155h2v2h-2zM286 157h2v2h-2zM44 144h2v2h-2zM47 147h2v2h-2zM48 159h2v2h-2zM47 164h2v2h-2zM46 166h2v2h-2zM45 173h2v2h-2zM44 174h2v2h-2zM44 181h2v2h-2zM43 188h2v2h-2zM42 192h2v2h-2zM30 207h2v2h-2zM475 206h2v2h-2zM476 206h2v2h-2zM476 207h2v2h-2zM478 206h2v2h-2zM478 206h2v2h-2zM478 207h2v2h-2zM479 206h2v2h-2zM479 206h2v2h-2zM480 206h2v2h-2zM481 207h2v2h-2zM482 207h2v2h-2zM483 206h2v2h-2zM484 207h2v2h-2zM484 208h2v2h-2zM485 207h2v2h-2zM486 208h2v2h-2zM487 208h2v2h-2zM487 208h2v2h-2zM489 208h2v2h-2zM490 208h2v2h-2zM490 207h2v2h-2zM491 208h2v2h-2zM491 207h2v2h-2zM492 207h2v2h-2zM506 213h2v2h-2zM510 213h2v2h-2zM514 214h2v2h-2zM515 213h2v2h-2zM518 213h2v2h-2zM520 214h2v2h-2zM521 213h2v2h-2zM526 214h2v2h-2zM531 216h2v2h-2zM536 217h2v2h-2zM537 218h2v2h-2zM547 220h2v2h-2zM548 220h2v2h-2zM553 221h2v2h-2zM553 221h2v2h-2zM563 225h2v2h-2zM564 225h2v2h-2zM566 224h2v2h-2zM573 227h2v2h-2zM578 228h2v2h-2zM577 228h2v2h-2zM583 228h2v2h-2zM586 230h2v2h-2zM588 230h2v2h-2z"/>
<path fill="#7800ff" d="M303 162h2v2h-2zM303 162h2v2h-2zM303 162h2v2h-2zM304 163h2v2h-2zM305 163h2v2h-2zM306 163h2v2h-2zM307 163h2v2h-2zM307 163h2v2h-2zM308 164h2v2h-2zM309 164h2v2h-2zM309 164h2v2h-2zM310 164h2v2h-2zM312 164h2v2h-2zM312 164h2v2h-2zM313 165h2v2h-2zM313 164h2v2h-2zM315 165h2v2h-2zM315 165h2v2h-2zM316 166h2v2h-2zM317 165h2v2h-2zM318 166h2v2h-2zM318 166h2v2h-2zM318 165h2v2h-2zM319 166h2v2h-2zM319 166h2v2h-2zM321 165h2v2h-2zM322 166h2v2h-2zM323 166h2v2h-2zM324 167h2v2h-2zM324 168h2v2h-2zM327 168h2v2h-2zM328 168h2v2h-2zM329 169h2v2h-2zM329 168h2v2h-2zM330 168h2v2h-2zM332 168h2v2h-2zM332 168h2v2h-2zM333 169h2v2h-2zM335 169h2v2h-2zM335 170h2v2h-2zM335 170h2v2h-2zM34 129h2v2h-2zM619 237h2v2h-2zM619 238h2v2h-2zM620 237h2v2h-2zM620 238h2v2h-2zM622 237h2v2h-2zM623 238h2v2h-2zM623 238h2v2h-2zM623 239h2v2h-2zM624 239h2v2h-2zM624 239h2v2h-2zM626 238h2v2h-2zM627 239h2v2h-2zM627 239h2v2h-2zM628 240h2v2h-2zM629 240h2v2h-2zM630 240h2v2h-2zM630 241h2v2h-2zM631 239h2v2h-2zM631 240h2v2h-2zM632 240h2v2h-2zM633 241h2v2h-2zM633 241h2v2h-2zM634 241h2v2h-2zM635 241h2v2h-2zM636 241h2v2h-2zM636 241h2v2h-2zM638 241h2v2h-2zM639 243h2v2h-2zM639 242h2v2h-2zM641 243h2v2h-2zM642 242h2v2h-2zM642 242h2v2h-2zM642 243h2v2h-2zM643 243h2v2h-2zM644 244h2v2h-2zM645 243h2v2h-2zM646 243h2v2h-2zM647 243h2v2h-2zM648 244h2v2h-2zM647 245h2v2h-2z"/>
<path fill="#b400ff" d="M312 164h2v2h-2zM322 167h2v2h-2zM325 166h2v2h-2zM326 167h2v2h-2zM326 168h2v2h-2zM329 168h2v2h-2zM331 169h2v2h-2zM345 172h2v2h-2zM492 208h2v2h-2zM495 209h2v2h-2zM495 210h2v2h-2zM497 211h2v2h-2zM497 211h2v2h-2zM499 212h2v2h-2zM500 211h2v2h-2zM500 212h2v2h-2zM500 212h2v2h-2zM594 232h2v2h-2zM606 235h2v2h-2zM608 235h2v2h-2zM608 235h2v2h-2zM611 236h2v2h-2zM637 242h2v2h-2zM639 243h2v2h-2zM643 243h2v2h-2z"/>
<path fill="#6400ff" d="M337 170h2v2h-2zM337 170h2v2h-2zM337 170h2v2h-2zM338 171h2v2h-2zM338 170h2v2h-2zM340 171h2v2h-2zM340 171h2v2h-2zM341 171h2v2h-2zM343 172h2v2h-2zM342 173h2v2h-2zM343 171h2v2h-2zM344 172h2v2h-2zM345 171h2v2h-2zM345 172h2v2h-2zM347 173h2v2h-2zM348 173h2v2h-2zM348 173h2v2h-2zM348 173h2v2h-2zM349 174h2v2h-2zM350 174h2v2h-2zM350 173h2v2h-2zM352 174h2v2h-2zM353 174h2v2h-2zM355 174h2v2h-2zM355 175h2v2h-2zM355 175h2v2h-2zM357 175h2v2h-2zM357 175h2v2h-2zM357 174h2v2h-2zM358 175h2v2h-2zM359 175h2v2h-2zM360 176h2v2h-2zM361 175h2v2h-2zM361 176h2v2h-2zM363 176h2v2h-2zM364 176h2v2h-2zM366 176h2v2h-2zM366 176h2v2h-2z"/>
<path fill="#5000ff" d="M367 178h2v2h-2zM367 177h2v2h-2zM367 177h2v2h-2zM368 178h2v2h-2zM370 178h2v2h-2zM370 177h2v2h-2zM371 178h2v2h-2zM371 178h2v2h-2zM373 178h2v2h-2zM374 178h2v2h-2zM374 180h2v2h-2zM374 179h2v2h-2zM375 179h2v2h-2zM377 180h2v2h-2zM377 180h2v2h-2zM377 180h2v2h-2zM379 181h2v2h-2zM380 182h2v2h-2zM380 180h2v2h-2zM380 182h2v2h-2zM381 181h2v2h-2zM381 182h2v2h-2zM382 182h2v2h-2zM383 182h2v2h-2zM384 182h2v2h-2zM384 182h2v2h-2zM385 182h2v2h-2zM387 183h2v2h-2zM386 182h2v2h-2zM387 183h2v2h-2zM388 184h2v2h-2zM389 183h2v2h-2zM390 184h2v2h-2zM391 184h2v2h-2zM391 184h2v2h-2zM392 184h2v2h-2zM393 185h2v2h-2zM395 186h2v2h-2zM396 187h2v2h-2zM396 186h2v2h-2zM397 188h2v2h-2zM26 202h2v2h-2z"/>
<path fill="#c800f0" d="M398 188h2v2h-2zM397 188h2v2h-2zM395 188h2v2h-2zM396 189h2v2h-2zM398 187h2v2h-2zM396 187h2v2h-2zM398 188h2v2h-2zM395 186h2v2h-2z"/>
<path fill="#0050ff" d="M26 117h2v2h-2z"/>
<path fill="#0028ff" d="M32 122h2v2h-2zM33 123h2v2h-2zM35 127h2v2h-2zM268 317h2v1h-2zM271 317h2v2h-2zM273 317h2v2h-2zM275 319h2v2h-2zM275 319h2v2h-2zM276 319h2v2h-2zM277 320h2v2h-2zM277 319h2v2h-2zM278 320h2v2h-2zM277 321h2v2h-2zM278 322h2v2h-2zM278 322h2v2h-2zM280 322h2v2h-2zM281 322h2v2h-2zM280 322h2v2h-2zM280 323h2v2h-2zM281 324h2v2h-2zM281 324h2v2h-2zM282 324h2v2h-2zM283 324h2v2h-2zM284 325h2v2h-2zM284 325h2v2h-2zM284 325h2v2h-2z"/>
<path fill="#dc00ff" d="M33 131h2v2h-2zM33 132h2v2h-2zM466 205h2v2h-2zM468 205h2v2h-2zM469 206h2v2h-2zM469 205h2v2h-2zM469 206h2v2h-2zM471 206h2v2h-2zM472 206h2v2h-2zM473 207h2v2h-2zM473 207h2v2h-2zM474 206h2v2h-2zM485 207h2v2h-2zM493 209h2v2h-2zM495 210h2v2h-2zM496 210h2v2h-2zM498 212h2v2h-2zM649 245h2v2h-2zM649 244h2v2h-2zM650 245h2v2h-2zM650 245h2v2h-2z"/>
<path fill="#1428ff" d="M285 327h2v2h-2zM285 326h2v2h-2zM286 327h2v2h-2zM287 327h2v2h-2zM288 327h2v2h-2zM287 328h2v2h-2zM288 328h2v2h-2zM288 329h2v2h-2zM289 329h2v2h-2zM290 330h2v2h-2zM290 330h2v2h-2zM290 331h2v2h-2zM292 330h2v2h-2zM292 331h2v2h-2zM292 331h2v2h-2z"/>
<path fill="#1414ff" d="M292 331h2v2h-2zM294 333h2v2h-2zM294 332h2v2h-2zM294 333h2v2h-2zM294 334h2v2h-2zM295 334h2v2h-2zM295 334h2v2h-2zM297 335h2v2h-2zM297 335h2v2h-2zM298 336h2v2h-2zM298 337h2v2h-2zM299 337h2v2h-2zM299 337h2v2h-2zM299 337h2v2h-2zM299 338h2v2h-2zM299 337h2v2h-2zM300 338h2v2h-2zM300 339h2v2h-2zM302 339h2v2h-2zM302 339h2v2h-2zM303 340h2v2h-2zM304 341h2v2h-2zM303 340h2v2h-2zM303 342h2v2h-2z"/>
<path fill="#2814ff" d="M305 342h2v2h-2zM305 341h2v2h-2zM306 342h2v2h-2zM306 342h2v2h-2zM306 344h2v2h-2zM307 344h2v2h-2zM308 344h2v2h-2zM308 344h2v2h-2zM308 346h2v2h-2zM307 347h2v2h-2zM308 346h2v2h-2zM307 348h2v2h-2zM307 348h2v2h-2zM308 348h2v2h-2zM307 350h2v2h-2zM307 349h2v2h-2zM306 350h2v2h-2zM306 350h2v2h-2zM306 351h2v2h-2z"/>
<path fill="#f000f0" d="M442 201h2v2h-2zM441 201h2v2h-2zM443 201h2v2h-2zM444 201h2v2h-2zM444 202h2v2h-2zM445 201h2v2h-2zM445 202h2v2h-2zM447 201h2v2h-2zM447 201h2v2h-2zM448 202h2v2h-2zM448 201h2v2h-2zM450 200h2v2h-2zM449 201h2v2h-2zM450 201h2v2h-2zM453 200h2v2h-2zM454 201h2v2h-2z"/>
<path fill="#f000ff" d="M452 201h2v2h-2zM471 205h2v2h-2zM470 206h2v2h-2zM650 246h2v2h-2zM650 246h2v2h-2zM651 246h2v2h-2zM652 247h2v2h-2zM653 246h2v2h-2zM654 246h2v2h-2zM654 248h2v2h-2zM654 247h2v2h-2z"/>
<path fill="#dc00f0" d="M453 200h2v2h-2zM454 201h2v2h-2zM454 201h2v2h-2zM456 202h2v2h-2zM456 201h2v2h-2zM457 203h2v2h-2zM458 202h2v2h-2zM458 202h2v2h-2zM460 203h2v2h-2zM460 203h2v2h-2zM460 203h2v2h-2zM460 203h2v2h-2zM462 204h2v2h-2zM462 204h2v2h-2zM463 205h2v2h-2zM463 205h2v2h-2zM464 205h2v2h-2zM464 205h2v2h-2zM466 206h2v2h-2z"/>
</svg>
<span class="st" style="left:298.8px;top:354.8px;color:#0ce40c">Detection</span>
<span class="st" style="left:361.2px;top:354.8px;color:#0ce40c">field</span>
<span class="st" style="left:393.4px;top:354.8px;color:#0ce40c">1</span>
<span class="st" style="left:409.8px;top:354.8px;color:#0ce40c">:</span>
<span class="st" style="left:428.6px;top:354.8px;color:#0ce40c">Clear</span>
<span class="st" style="left:298.8px;top:371.6px;color:#e6e614">Detection</span>
<span class="st" style="left:361.2px;top:371.6px;color:#e6e614">field</span>
<span class="st" style="left:393.4px;top:371.6px;color:#e6e614">2</span>
<span class="st" style="left:409.8px;top:371.6px;color:#e6e614">:</span>
<span class="st" style="left:419.2px;top:371.6px;color:#e6e614">Infringed</span>
<span class="st" style="left:298.8px;top:388.4px;color:#e6e614">Detection</span>
<span class="st" style="left:361.2px;top:388.4px;color:#e6e614">field</span>
<span class="st" style="left:393.4px;top:388.4px;color:#e6e614">3</span>
<span class="st" style="left:409.8px;top:388.4px;color:#e6e614">:</span>
<span class="st" style="left:419.2px;top:388.4px;color:#e6e614">Infringed</span>
<span class="st" style="left:298.8px;top:405.2px;color:#0ce40c">Detection</span>
<span class="st" style="left:361.2px;top:405.2px;color:#0ce40c">field</span>
<span class="st" style="left:393.4px;top:405.2px;color:#0ce40c">4</span>
<span class="st" style="left:409.8px;top:405.2px;color:#0ce40c">:</span>
<span class="st" style="left:428.6px;top:405.2px;color:#0ce40c">Clear</span>
<span class="st" style="left:345.7px;top:422.0px;color:#e6e614">Output</span>
<span class="st" style="left:393.4px;top:422.0px;color:#e6e614">1</span>
<span class="st" style="left:409.8px;top:422.0px;color:#e6e614">:</span>
<span class="st" style="left:413.7px;top:422.0px;color:#e6e614">[ON]</span>
<span class="st" style="left:449.3px;top:422.0px;color:#e6e614">Count:141</span>
<span class="st" style="left:345.7px;top:438.7px;color:#6c6c6c">Output</span>
<span class="st" style="left:393.4px;top:438.7px;color:#6c6c6c">2</span>
<span class="st" style="left:410.3px;top:438.7px;color:#6c6c6c">[OFF]</span>
<span class="st" style="left:452.7px;top:438.7px;color:#6c6c6c">Count:299</span>
<span class="st" style="left:345.7px;top:455.5px;color:#6c6c6c">Output</span>
<span class="st" style="left:393.4px;top:455.5px;color:#6c6c6c">3</span>
<span class="st" style="left:410.3px;top:455.5px;color:#6c6c6c">[OFF]</span>
<span class="st" style="left:452.7px;top:455.5px;color:#6c6c6c">Count:199</span>
<span class="st" style="left:345.7px;top:472.3px;color:#e6e614">Output</span>
<span class="st" style="left:393.4px;top:472.3px;color:#e6e614">4</span>
<span class="st" style="left:409.8px;top:472.3px;color:#e6e614">:</span>
<span class="st" style="left:413.7px;top:472.3px;color:#e6e614">[ON]</span>
<span class="st" style="left:449.3px;top:472.3px;color:#e6e614">Count:148</span>
<span class="st" style="left:345.7px;top:489.1px;color:#e6e614">Output</span>
<span class="st" style="left:393.4px;top:489.1px;color:#e6e614">5</span>
<span class="st" style="left:409.8px;top:489.1px;color:#e6e614">:</span>
<span class="st" style="left:421.0px;top:489.1px;color:#e6e614">[ON]</span>
<span class="st" style="left:456.3px;top:489.1px;color:#e6e614">Count:4</span>
<span class="st" style="left:345.7px;top:505.9px;color:#e6e614">Output</span>
<span class="st" style="left:393.4px;top:505.9px;color:#e6e614">6</span>
<span class="st" style="left:409.8px;top:505.9px;color:#e6e614">:</span>
<span class="st" style="left:421.0px;top:505.9px;color:#e6e614">[ON]</span>
<span class="st" style="left:456.3px;top:505.9px;color:#e6e614">Count:4</span>
<span class="st sl" style="left:407.3px;top:255.2px;color:#0ce40c">4</span>
<span class="st sl" style="left:401.6px;top:271.7px;color:#e6e614">3</span>
<span class="st sl" style="left:426.6px;top:278.6px;color:#e6e614">2</span>
<span class="st sl" style="left:442.6px;top:266.9px;color:#0ce40c">1</span>
<div class="abs" style="left:168px;top:511px;width:558px;height:1px;background:#6f6f6f"></div>
<div class="abs" style="left:410px;top:343px;width:1px;height:345px;background:rgba(111,111,111,0.55)"></div>
</div>
</body>
</html>
